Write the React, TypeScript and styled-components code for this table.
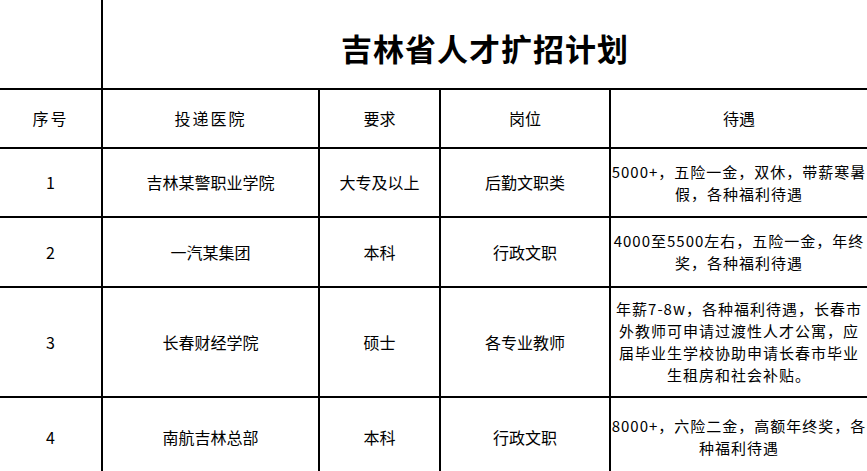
import React from 'react';
import styled, { createGlobalStyle } from 'styled-components';

const GlobalStyle = createGlobalStyle`
  html, body {
    margin: 0;
    padding: 0;
    background: #ffffff;
  }

  body {
    font-family: 'Noto Sans CJK SC', 'DejaVu Sans', sans-serif;
    color: #000000;
    overflow: hidden;
  }
`;

type Row = {
  no: string;
  school: string;
  level: string;
  post: string;
  benefits: string[];
  height: number;
};

const rows: Row[] = [
  {
    no: '1',
    school: '吉林某警职业学院',
    level: '大专及以上',
    post: '后勤文职类',
    benefits: ['5000+，五险一金，双休，带薪寒暑', '假，各种福利待遇'],
    height: 69,
  },
  {
    no: '2',
    school: '一汽某集团',
    level: '本科',
    post: '行政文职',
    benefits: ['4000至5500左右，五险一金，年终', '奖，各种福利待遇'],
    height: 70,
  },
  {
    no: '3',
    school: '长春财经学院',
    level: '硕士',
    post: '各专业教师',
    benefits: [
      '年薪7-8w，各种福利待遇，长春市',
      '外教师可申请过渡性人才公寓，应',
      '届毕业生学校协助申请长春市毕业',
      '生租房和社会补贴。',
    ],
    height: 110,
  },
  {
    no: '4',
    school: '南航吉林总部',
    level: '本科',
    post: '行政文职',
    benefits: ['8000+，六险二金，高额年终奖，各', '种福利待遇'],
    height: 80,
  },
];

const App = () => {
  const rowHeights = [90, 59, ...rows.map((r) => r.height)].map((h) => `${h}px`).join(' ');

  return (
    <>
      <GlobalStyle />
      <Sheet style={{ gridTemplateRows: rowHeights }}>
        <Cell />
        <TitleCell $last>吉林省人才扩招计划</TitleCell>

        <Cell $spaced>序号</Cell>
        <Cell $spaced>投递医院</Cell>
        <Cell>要求</Cell>
        <Cell>岗位</Cell>
        <Cell $last>待遇</Cell>

        {rows.map((row) => (
          <React.Fragment key={row.no}>
            <Cell>{row.no}</Cell>
            <Cell>{row.school}</Cell>
            <Cell>{row.level}</Cell>
            <Cell>{row.post}</Cell>
            <Cell $last>
              <Benefits>
                {row.benefits.map((line) => (
                  <Line key={line}>{line}</Line>
                ))}
              </Benefits>
            </Cell>
          </React.Fragment>
        ))}
      </Sheet>
    </>
  );
};
export default App;

const Sheet = styled.div`
  display: grid;
  grid-template-columns: 103px 217px 121px 170px 256px;
  width: 867px;
`;

const Cell = styled.div<{ $last?: boolean; $spaced?: boolean }>`
  box-sizing: border-box;
  display: flex;
  align-items: center;
  justify-content: center;
  text-align: center;
  border-bottom: 2px solid #000;
  border-right: ${(p) => (p.$last ? 'none' : '2px solid #000')};
  font-size: 16px;
  line-height: 21px;
  letter-spacing: ${(p) => (p.$spaced ? '2px' : '0')};
  white-space: nowrap;
`;

const TitleCell = styled(Cell)`
  grid-column: 2 / span 4;
  padding-top: 6px;
  font-size: 31px;
  font-weight: 700;
  letter-spacing: 1px;
`;

const Benefits = styled.div`
  display: flex;
  flex-direction: column;
  align-items: center;
  padding: 0 6px;
  font-size: 15px;
  line-height: 22px;
  letter-spacing: 1px;
`;

const Line = styled.span`
  display: block;
  white-space: nowrap;
`;
